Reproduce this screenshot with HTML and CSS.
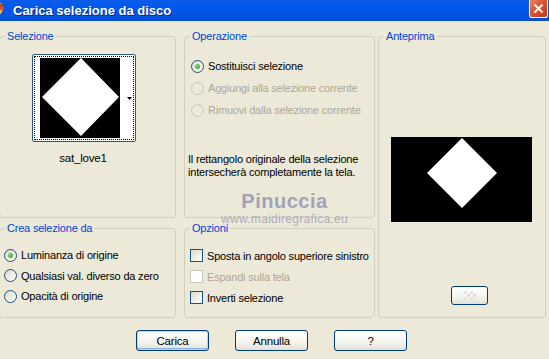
FILE: index.html
```html
<!DOCTYPE html>
<html lang="it">
<head>
    <meta charset="UTF-8">
    <title>Carica selezione da disco</title>
    <link rel="stylesheet" href="styles.css">
</head>
<body>

    <div class="titlebar">
        <div class="title">
            <svg class="app-icon" width="16" height="18" viewBox="0 0 16 18">
                <path d="M3 2 L12 1 L14 8 L9 16 L2 13 Z" fill="#f3c24a"/>
                <path d="M8 3 L13 2 L15 7 L12 9 Z" fill="#e0502a"/>
                <path d="M6 9 L10 8 L11 12 L7 14 Z" fill="#3a8a2e"/>
                <path d="M11 4 L15 1" stroke="#8a4a20" stroke-width="2"/>
            </svg>
            <span class="title-text">Carica selezione da disco</span>
        </div>
        <div class="close">
            <svg width="11" height="11" viewBox="0 0 11 11">
                <path d="M1.5 1.5 L9.5 9.5 M9.5 1.5 L1.5 9.5" stroke="#fff" stroke-width="2"/>
            </svg>
        </div>
    </div>

    <div class="panels">
        <fieldset class="group g-sel">
            <legend>Selezione</legend>
            <div class="sel-body">
                <div class="thumb">
                    <div class="thumb-inner">
                        <svg class="thumb-img" width="80" height="80" viewBox="0 0 80 80">
                            <rect width="80" height="80" fill="#000"/>
                            <polygon points="41,0 79,39 41,78 2,39" fill="#fff"/>
                        </svg>
                        <div class="thumb-drop">
                            <svg width="5" height="3" viewBox="0 0 5 3"><polygon points="0,0 5,0 2.5,3" fill="#000"/></svg>
                        </div>
                    </div>
                </div>
                <div class="thumb-name">sat_love1</div>
            </div>
        </fieldset>

        <fieldset class="group g-op">
            <legend>Operazione</legend>
            <div class="op-body">
                <div class="opt-row"><span class="radio checked"></span>Sostituisci selezione</div>
                <div class="opt-row disabled"><span class="radio"></span>Aggiungi alla selezione corrente</div>
                <div class="opt-row disabled"><span class="radio"></span>Rimuovi dalla selezione corrente</div>
                <p class="note">Il rettangolo originale della selezione intersecherà completamente la tela.</p>
            </div>
        </fieldset>

        <fieldset class="group g-prev">
            <legend>Anteprima</legend>
            <div class="prev-body">
                <svg class="preview" width="141" height="85" viewBox="0 0 141 85">
                    <rect width="141" height="85" fill="#000"/>
                    <polygon points="71,1 106,36 71,71 36,36" fill="#fff"/>
                </svg>
                <button class="btn small-btn">
                    <svg width="18" height="9" viewBox="0 0 18 9">
                        <rect x="3" y="0" width="3" height="3" fill="#e4e4e4"/>
                        <rect x="9" y="0" width="3" height="3" fill="#e4e4e4"/>
                        <rect x="6" y="3" width="3" height="3" fill="#dcdcdc"/>
                        <rect x="12" y="3" width="3" height="3" fill="#dcdcdc"/>
                        <rect x="3" y="6" width="3" height="3" fill="#e4e4e4"/>
                        <rect x="9" y="6" width="3" height="3" fill="#e4e4e4"/>
                    </svg>
                </button>
            </div>
        </fieldset>

        <fieldset class="group g-crea">
            <legend>Crea selezione da</legend>
            <div class="crea-body">
                <div class="opt-row"><span class="radio checked"></span>Luminanza di origine</div>
                <div class="opt-row"><span class="radio"></span>Qualsiasi val. diverso da zero</div>
                <div class="opt-row"><span class="radio"></span>Opacità di origine</div>
            </div>
        </fieldset>

        <fieldset class="group g-opt">
            <legend>Opzioni</legend>
            <div class="optz-body">
                <div class="chk-row"><span class="check"></span>Sposta in angolo superiore sinistro</div>
                <div class="chk-row disabled"><span class="check"></span>Espandi sulla tela</div>
                <div class="chk-row"><span class="check"></span>Inverti selezione</div>
            </div>
        </fieldset>
    </div>

    <div class="actions">
        <button class="btn default">Carica</button>
        <button class="btn">Annulla</button>
        <button class="btn">?</button>
    </div>

    <div class="watermark">
        <span class="wm-name">Pinuccia</span>
        <span class="wm-url">www.maidiregrafica.eu</span>
    </div>

</body>
</html>
```

FILE: styles.css
```css
body {
    margin: 0;
    width: 549px;
    height: 359px;
    overflow: hidden;
    background: #ece9d8;
    font-family: "Liberation Sans", Arial, sans-serif;
    font-size: 11px;
    letter-spacing: -0.2px;
    color: #000;
    position: relative;
}

/* Barra del titolo */
.titlebar {
    height: 21px;
    background: linear-gradient(#0a5ce8, #0058ee 40%, #0052e0 80%, #0a4fd0);
    display: flex;
    justify-content: space-between;
    align-items: flex-start;
}
.title {
    display: flex;
    align-items: center;
    height: 21px;
}
.app-icon {
    margin-left: -11px;
    margin-right: 8px;
}
.title-text {
    color: #fff;
    font-weight: bold;
    font-size: 13px;
    letter-spacing: 0;
    text-shadow: 1px 1px 0 #0a2a8a;
}
.close {
    width: 17px;
    height: 17px;
    margin-right: 1px;
    border: 1px solid #fff;
    border-top: none;
    border-radius: 0 0 3px 3px;
    background: linear-gradient(135deg, #e8826a, #d8502c 50%, #c03a18);
    display: flex;
    align-items: center;
    justify-content: center;
}

/* Riquadri */
.panels {
    display: grid;
    grid-template-columns: 177px 199px 171px;
    grid-template-rows: 188px 96px;
    grid-template-areas:
        "sel op prev"
        "crea opt prev";
    row-gap: 4px;
    margin: 9px 0 0 -1px;
}
.group {
    margin: 0;
    padding: 0;
    min-width: 0;
    border: 1px solid #d0d0bf;
    border-radius: 4px;
    box-sizing: border-box;
}
.group legend {
    margin-left: 5px;
    padding: 0 2px;
    color: #0046d5;
    line-height: 13px;
}
.g-sel { grid-area: sel; }
.g-op { grid-area: op; margin-left: 8px; }
.g-prev { grid-area: prev; margin-left: 3px; }
.g-crea { grid-area: crea; }
.g-opt { grid-area: opt; margin-left: 8px; }

/* Selezione */
.sel-body {
    padding: 11px 0 0 32px;
}
.thumb {
    width: 100px;
    height: 84px;
    border: 1px solid #2c5a8a;
    border-radius: 2px;
    background: #fff;
    padding: 1px;
    box-sizing: content-box;
}
.thumb-inner {
    height: 100%;
    border: 1px dotted #000;
    box-sizing: border-box;
    display: flex;
    padding: 1px 0 0 5px;
}
.thumb-img {
    display: block;
}
.thumb-drop {
    flex: 1;
    display: flex;
    align-items: center;
    justify-content: flex-end;
    padding-right: 1px;
}
.thumb-name {
    width: 102px;
    margin-top: 10px;
    text-align: center;
    font-size: 11.5px;
}

/* Righe con radio e caselle */
.opt-row, .chk-row {
    display: flex;
    align-items: center;
    white-space: nowrap;
}
.op-body {
    padding: 12px 0 0 6px;
}
.op-body .opt-row {
    height: 22px;
}
.crea-body {
    padding: 10px 0 0 4px;
}
.crea-body .opt-row {
    height: 20.5px;
}
.optz-body {
    padding: 10px 0 0 5px;
}
.chk-row {
    height: 21px;
}
.disabled {
    color: #aca899;
}
.radio {
    width: 11px;
    height: 11px;
    border: 1px solid #1c5180;
    border-radius: 50%;
    background: linear-gradient(135deg, #dcd9c8, #fff);
    margin-right: 4px;
    display: flex;
    align-items: center;
    justify-content: center;
    flex-shrink: 0;
}
.radio.checked::after {
    content: "";
    width: 5px;
    height: 5px;
    border-radius: 50%;
    background: radial-gradient(circle at 35% 35%, #7be07b, #21a121);
}
.disabled .radio {
    border-color: #cac8bb;
    background: #ece9d8;
}
.check {
    width: 11px;
    height: 11px;
    border: 1px solid #1c5180;
    background: linear-gradient(135deg, #dcd9c8, #fff);
    margin-right: 4px;
    flex-shrink: 0;
}
.disabled .check {
    border-color: #cac8bb;
    background: #fff;
}
.note {
    margin: 32px 0 0 -3px;
    line-height: 13px;
}

/* Anteprima */
.prev-body {
    padding: 94px 0 0 12px;
}
.preview {
    display: block;
}
.small-btn {
    display: flex;
    width: 37px;
    height: 19px;
    margin: 64px 0 0 60px;
}

/* Bottoni */
.btn {
    font-family: inherit;
    font-size: 11.5px;
    letter-spacing: -0.2px;
    color: #000;
    border: 1px solid #003c74;
    border-radius: 3px;
    background: linear-gradient(#fff, #f4f3ee 60%, #e3e1d6);
    padding: 0;
    align-items: center;
    justify-content: center;
}
.actions {
    display: flex;
    gap: 26px;
    margin-top: 12px;
    padding-left: 136px;
}
.actions .btn {
    width: 73px;
    height: 21px;
}
.btn.default {
    box-shadow: inset 0 0 0 1px #bcd4f6, inset 0 -1px 0 1px #89ade4;
}

/* Filigrana */
.watermark {
    position: absolute;
    left: 222px;
    top: 191px;
    display: flex;
    flex-direction: column;
    align-items: center;
    width: 125px;
    letter-spacing: 0;
}
.wm-name {
    font-size: 20px;
    line-height: 20px;
    color: #a2a2b8;
    font-weight: bold;
    letter-spacing: 0.5px;
}
.wm-url {
    font-size: 12px;
    line-height: 12px;
    color: #adadbc;
    margin-top: 2px;
    letter-spacing: 0.3px;
}
```
